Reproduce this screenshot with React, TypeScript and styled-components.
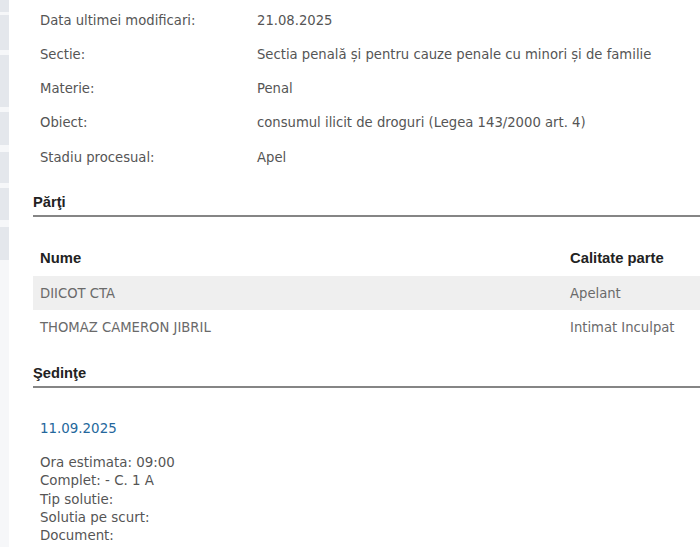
import React from "react";
import styled, { createGlobalStyle } from "styled-components";

const Global = createGlobalStyle`
  html, body { margin: 0; padding: 0; background: #ffffff; }
  body { font-family: "DejaVu Sans", Verdana, sans-serif; }
`;

const Page = styled.div`
  display: flex;
  width: 700px;
  height: 547px;
  overflow: hidden;
  background: #ffffff;
`;

const Rail = styled.div`
  width: 9px;
  flex: none;
  display: flex;
  flex-direction: column;
  background: #f6f7f9;
`;

const RailBlock = styled.div<{ $h: number; $gap: number }>`
  height: ${(p) => p.$h}px;
  margin-top: ${(p) => p.$gap}px;
  background: #e4e7ec;
`;

const Content = styled.div`
  flex: 1;
  margin-left: 24px;
  display: flex;
  flex-direction: column;
  color: #555555;
  font-size: 13.2px;
`;

const InfoList = styled.div`
  padding-top: 3px;
  display: flex;
  flex-direction: column;
`;

const InfoRow = styled.div`
  display: grid;
  grid-template-columns: 217px 1fr;
  height: 34.25px;
  align-items: center;
  padding-left: 7px;
  white-space: nowrap;
`;

const SectionTitle = styled.div<{ $mt: number }>`
  margin-top: ${(p) => p.$mt}px;
  font-family: "Liberation Sans", Arial, sans-serif;
  font-weight: bold;
  font-size: 14.7px;
  line-height: 20px;
  color: #222222;
  padding-bottom: 3px;
  border-bottom: 2px solid #858585;
`;

const Table = styled.div`
  margin-top: 23px;
  display: flex;
  flex-direction: column;
`;

const TableRow = styled.div<{ $shade?: boolean; $head?: boolean }>`
  display: grid;
  grid-template-columns: 530px 1fr;
  height: ${(p) => (p.$head ? 36 : 34)}px;
  align-items: center;
  background: ${(p) => (p.$shade ? "#efefef" : "transparent")};
  white-space: nowrap;
`;

const Cell = styled.div<{ $head?: boolean }>`
  padding-left: 7px;
  ${(p) =>
    p.$head
      ? `font-family: "Liberation Sans", Arial, sans-serif; font-weight: bold; font-size: 14.8px; color: #222222;`
      : `color: #6a6a6a;`}
`;

const Hearing = styled.div`
  margin-top: 32px;
  padding-left: 7px;
  display: flex;
  flex-direction: column;
`;

const HearingDate = styled.div`
  color: #24679c;
  line-height: 18px;
  font-size: 13.4px;
`;

const HearingDetails = styled.div`
  margin-top: 16px;
  line-height: 18.2px;
  font-size: 13.4px;
  color: #555555;
`;

const rail = [
  { h: 12, g: 0 },
  { h: 35, g: 3 },
  { h: 52, g: 5 },
  { h: 33, g: 5 },
  { h: 31, g: 7 },
  { h: 32, g: 5 },
  { h: 33, g: 7 },
];

const info = [
  ["Data ultimei modificari:", "21.08.2025"],
  ["Sectie:", "Sectia penală și pentru cauze penale cu minori și de familie"],
  ["Materie:", "Penal"],
  ["Obiect:", "consumul ilicit de droguri (Legea 143/2000 art. 4)"],
  ["Stadiu procesual:", "Apel"],
];

const parties = [
  ["DIICOT CTA", "Apelant"],
  ["THOMAZ CAMERON JIBRIL", "Intimat Inculpat"],
];

const details = [
  "Ora estimata: 09:00",
  "Complet: - C. 1 A",
  "Tip solutie:",
  "Solutia pe scurt:",
  "Document:",
];

export default function App() {
  return (
    <>
      <Global />
      <Page>
        <Rail>
          {rail.map((b, i) => (
            <RailBlock key={i} $h={b.h} $gap={b.g} />
          ))}
        </Rail>
        <Content>
          <InfoList>
            {info.map(([k, v]) => (
              <InfoRow key={k}>
                <span>{k}</span>
                <span>{v}</span>
              </InfoRow>
            ))}
          </InfoList>
          <SectionTitle $mt={18}>Părţi</SectionTitle>
          <Table>
            <TableRow $head>
              <Cell $head>Nume</Cell>
              <Cell $head>Calitate parte</Cell>
            </TableRow>
            {parties.map(([n, c], i) => (
              <TableRow key={n} $shade={i % 2 === 0}>
                <Cell>{n}</Cell>
                <Cell>{c}</Cell>
              </TableRow>
            ))}
          </Table>
          <SectionTitle $mt={19}>Şedinţe</SectionTitle>
          <Hearing>
            <HearingDate>11.09.2025</HearingDate>
            <HearingDetails>
              {details.map((d) => (
                <div key={d}>{d}</div>
              ))}
            </HearingDetails>
          </Hearing>
        </Content>
      </Page>
    </>
  );
}
